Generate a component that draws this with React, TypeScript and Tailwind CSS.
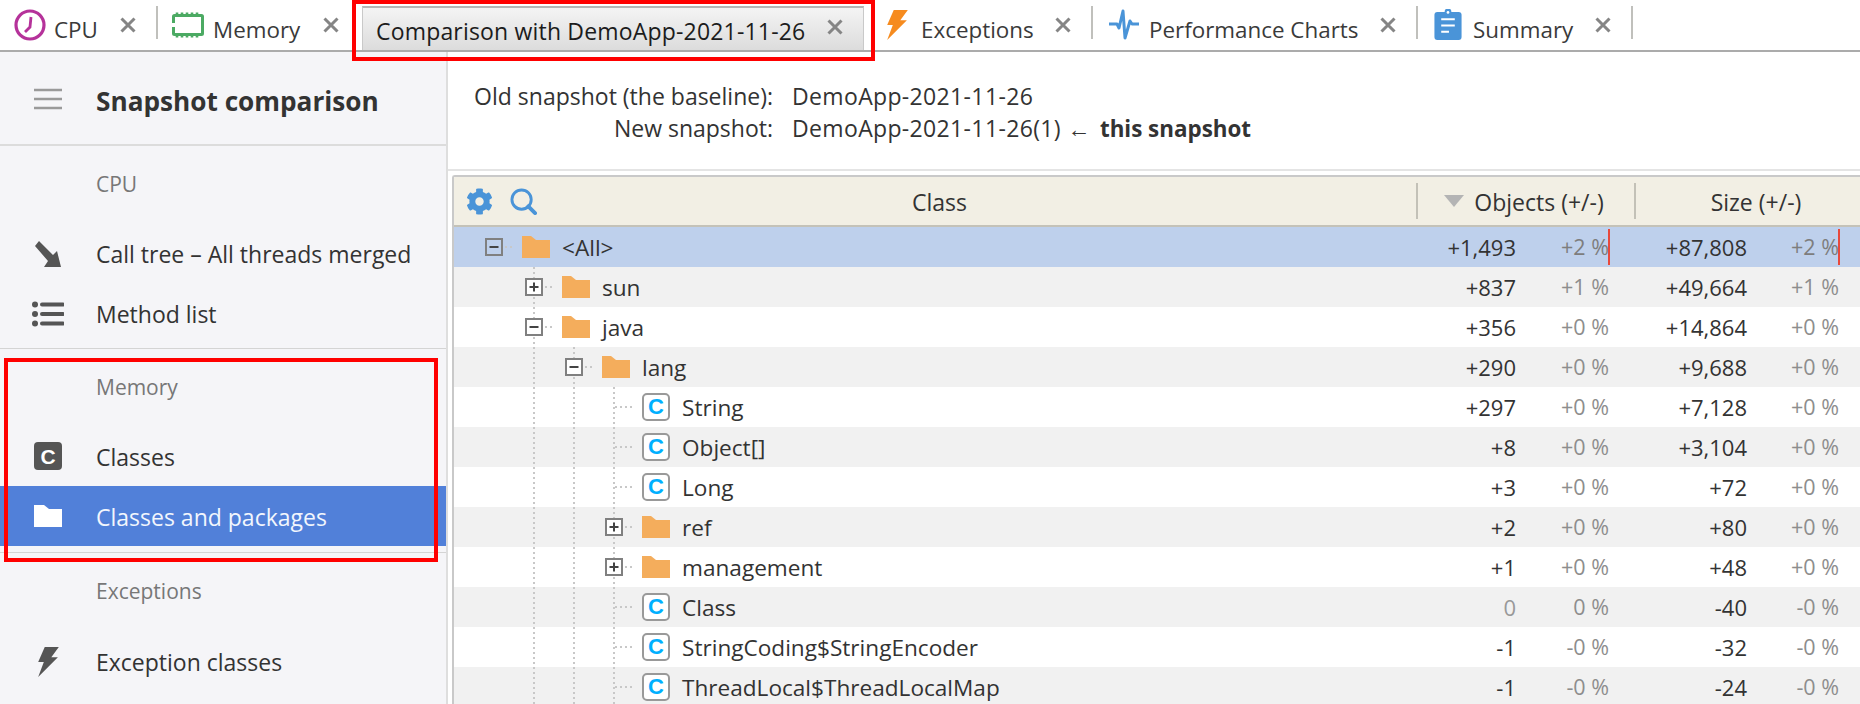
import { FaCog } from "react-icons/fa";
import type { ReactNode } from "react";

const FONT = "font-['Open_Sans','Noto_Sans',sans-serif]";

function Close() {
  return (
    <svg viewBox="0 0 16 16" className="w-[16px] h-[16px]" aria-hidden="true">
      <path d="M1.5 1.5 14.5 14.5M14.5 1.5 1.5 14.5" stroke="#858585" strokeWidth="3" fill="none" />
    </svg>
  );
}

function CpuIcon() {
  return (
    <svg viewBox="0 0 32 32" className="w-[32px] h-[32px]" aria-hidden="true">
      <circle cx="16" cy="16" r="14" fill="none" stroke="#b5329a" strokeWidth="3.2" />
      <path d="M17 8 L16 18 L11 23" fill="none" stroke="#b5329a" strokeWidth="2.8" />
    </svg>
  );
}

function MemoryIcon() {
  return (
    <svg viewBox="0 0 32 26" className="w-[32px] h-[26px]" aria-hidden="true">
      <rect x="1.5" y="3.5" width="29" height="19" rx="1" fill="none" stroke="#4caa63" strokeWidth="3" />
      <path d="M5 0.5v3M10 0.5v3M15 0.5v3M20 0.5v3M25 0.5v3M5 22.5v3M10 22.5v3M15 22.5v3M20 22.5v3M25 22.5v3" stroke="#4caa63" strokeWidth="2.6" />
      <path d="M0 11h3v4H0z" fill="#fff" />
    </svg>
  );
}

function BoltIcon({ fill, className }: { fill: string; className: string }) {
  return (
    <svg viewBox="0 0 24 32" className={className} aria-hidden="true">
      <path d="M8 0H23L15 11H22L1 32L7 16H1Z" fill={fill} />
    </svg>
  );
}

function PulseIcon() {
  return (
    <svg viewBox="0 0 32 32" className="w-[32px] h-[32px]" aria-hidden="true">
      <path d="M1 15H9L11 19L15 2L17 29L22 12L24 15H31" fill="none" stroke="#4a94d8" strokeWidth="3" strokeLinejoin="round" />
    </svg>
  );
}

function SummaryIcon() {
  return (
    <svg viewBox="0 0 28 32" className="w-[28px] h-[31px]" aria-hidden="true">
      <path d="M3 3H10.5A3.5 3.5 0 0 1 17.5 3H25A3 3 0 0 1 28 6V29A3 3 0 0 1 25 32H3A3 3 0 0 1 0 29V6A3 3 0 0 1 3 3Z" fill="#4a94d8" />
      <circle cx="14" cy="3.5" r="1.4" fill="#fff" />
      <path d="M7 10.5H21M7 17H21M7 23.5H15" stroke="#fff" strokeWidth="2" />
    </svg>
  );
}

function Tab({ icon, label, iconGap, sep = true, className }: { icon: ReactNode; label: string; iconGap: string; sep?: boolean; className: string }) {
  return (
    <div className={`flex items-center h-[50px] shrink-0 ${className}`}>
      <span className={`flex shrink-0 -mt-[1px] ${iconGap}`}>{icon}</span>
      <span className="flex-1 text-[22.4px] text-[#3a3a3a] mt-[10px] leading-[30px] whitespace-nowrap">{label}</span>
      <span className="flex -mt-[1px]">
        <Close />
      </span>
      {sep && <span className="w-[2px] h-[33px] bg-[#c0c0bc] ml-[20px] -mt-[5px]" />}
    </div>
  );
}

function TabBar() {
  return (
    <div className="relative flex h-[52px] border-b-2 border-[#ababab] bg-white shrink-0">
      <Tab className="w-[158px] pl-[14px]" iconGap="mr-[8px]" label="CPU" icon={<CpuIcon />} />
      <Tab className="w-[204px] pl-[14px] pr-[23px]" iconGap="mr-[9px]" label="Memory" sep={false} icon={<MemoryIcon />} />
      <div className="mt-[6px] w-[502px] h-[44px] shrink-0 flex items-center pl-[13px] pr-[20px] border-x border-t-2 border-x-[#c9c9c9] border-t-[#b5b5b5] bg-gradient-to-b from-[#f4f4f4] to-[#dcdcdc]">
        <span className="flex-1 text-[23px] tracking-[0.18px] text-[#1c1c1c] mt-[4px] leading-[30px] whitespace-nowrap">Comparison with DemoApp-2021-11-26</span>
        <span className="flex -mt-[5px]"><Close /></span>
      </div>
      <Tab className="w-[229px] pl-[22px]" iconGap="mr-[12px]" label="Exceptions" icon={<BoltIcon fill="#f68b1f" className="w-[23px] h-[30px]" />} />
      <Tab className="w-[325px] pl-[15px]" iconGap="mr-[9px]" label="Performance Charts" icon={<PulseIcon />} />
      <Tab className="w-[215px] pl-[16px]" iconGap="mr-[11px]" label="Summary" icon={<SummaryIcon />} />
      <div className="absolute left-[352px] top-0 w-[523px] h-[61px] border-4 border-[#ff0000] pointer-events-none z-10" />
    </div>
  );
}

function NavLabel({ children, className }: { children: string; className: string }) {
  return <div className={`pl-[96px] pt-[23px] text-[21px] text-[#777] leading-[30px] ${className}`}>{children}</div>;
}

function NavItem({ icon, label, selected, low }: { icon: ReactNode; label: string; selected?: boolean; low?: boolean }) {
  return (
    <div className={`flex items-center h-[60px] ${selected ? "bg-[#5180d9] text-[#f2f6fd]" : "text-[#333]"}`}>
      <span className="w-[96px] flex justify-center">{icon}</span>
      <span className={`text-[23px] leading-[30px] ${low ? "mt-[2px]" : ""}`}>{label}</span>
    </div>
  );
}

function Sidebar() {
  return (
    <aside className="relative w-[448px] shrink-0 bg-[#f5f5f8] border-r-2 border-[#dedede]">
      <div className="flex items-center h-[94px] border-b-2 border-[#dcdcdc]">
        <svg viewBox="0 0 28 22" className="ml-[34px] w-[28px] h-[22px] mt-[1px]" aria-hidden="true">
          <path d="M0 2H28M0 11H28M0 20H28" stroke="#9a9a9a" strokeWidth="2.6" />
        </svg>
        <span className="ml-[34px] text-[26.2px] font-bold text-[#333] leading-[34px] mt-[5px]">Snapshot comparison</span>
      </div>
      <NavLabel className="h-[78px]">CPU</NavLabel>
      <NavItem
        label="Call tree – All threads merged"
        icon={
          <svg viewBox="0 0 26 26" className="w-[26px] h-[26px]" aria-hidden="true">
            <path d="M4 0 18 14 22 10 26 26 9 26 13 20 0 5Z" fill="#555" />
          </svg>
        }
      />
      <NavItem
        label="Method list"
        icon={
          <svg viewBox="0 0 32 26" className="w-[32px] h-[26px]" aria-hidden="true">
            <circle cx="3" cy="3.5" r="3" fill="#555" />
            <circle cx="3" cy="13" r="3" fill="#555" />
            <circle cx="3" cy="22.5" r="3" fill="#555" />
            <path d="M10 3.5H31M10 13H31M10 22.5H31" stroke="#555" strokeWidth="4" strokeLinecap="round" />
          </svg>
        }
      />
      <div className="mt-[4px] border-t border-[#d4d4d4]" />
      <NavLabel className="h-[77px]">Memory</NavLabel>
      <NavItem
        low
        label="Classes"
        icon={
          <span className="w-[28px] h-[28px] rounded-[4px] bg-[#555] flex items-center justify-center text-white text-[21px] font-bold font-['Liberation_Sans',sans-serif] leading-none">
            C
          </span>
        }
      />
      <NavItem
        low
        selected
        label="Classes and packages"
        icon={
          <svg viewBox="0 0 28 22" className="w-[28px] h-[22px]" aria-hidden="true">
            <path d="M0 0H10L15 4H28V22H0Z" fill="#fff" />
          </svg>
        }
      />
      <div className="mt-[6px] border-t border-[#d4d4d4]" />
      <NavLabel className="h-[79px]">Exceptions</NavLabel>
      <NavItem label="Exception classes" icon={<BoltIcon fill="#555" className="w-[23px] h-[30px]" />} />
      <div className="absolute left-[4px] top-[306px] w-[434px] h-[204px] border-4 border-[#ff0000] pointer-events-none" />
    </aside>
  );
}

function Folder() {
  return (
    <svg viewBox="0 0 28 22" className="w-[28px] h-[22px] shrink-0" aria-hidden="true">
      <path d="M0 0H9L14 4H28V22H0Z" fill="#f4ad5c" />
    </svg>
  );
}

function ClassIcon() {
  return (
    <span className="w-[28px] h-[28px] shrink-0 rounded-[5px] border-2 border-[#999] bg-white flex items-center justify-center text-[#00b0ff] text-[22px] font-bold font-['Liberation_Sans',sans-serif] leading-none">
      C
    </span>
  );
}

function Expander({ open, selected }: { open: boolean; selected: boolean }) {
  return (
    <svg viewBox="0 0 18 18" className="relative w-[18px] h-[18px]" aria-hidden="true">
      <rect x="1" y="1" width="16" height="16" fill={selected ? "#bed0ec" : "#fff"} stroke="#808080" strokeWidth="2" />
      <path d={open ? "M4.5 9H13.5" : "M4.5 9H13.5M9 4.5V13.5"} stroke="#444" strokeWidth="2" />
    </svg>
  );
}

type Row = {
  name: string;
  depth: number;
  kind: "open" | "closed" | "class";
  objects: string;
  objectsPct: string;
  size: string;
  sizePct: string;
};

const ROWS: Row[] = [
  { name: "<All>", depth: 0, kind: "open", objects: "+1,493", objectsPct: "+2 %", size: "+87,808", sizePct: "+2 %" },
  { name: "sun", depth: 1, kind: "closed", objects: "+837", objectsPct: "+1 %", size: "+49,664", sizePct: "+1 %" },
  { name: "java", depth: 1, kind: "open", objects: "+356", objectsPct: "+0 %", size: "+14,864", sizePct: "+0 %" },
  { name: "lang", depth: 2, kind: "open", objects: "+290", objectsPct: "+0 %", size: "+9,688", sizePct: "+0 %" },
  { name: "String", depth: 3, kind: "class", objects: "+297", objectsPct: "+0 %", size: "+7,128", sizePct: "+0 %" },
  { name: "Object[]", depth: 3, kind: "class", objects: "+8", objectsPct: "+0 %", size: "+3,104", sizePct: "+0 %" },
  { name: "Long", depth: 3, kind: "class", objects: "+3", objectsPct: "+0 %", size: "+72", sizePct: "+0 %" },
  { name: "ref", depth: 3, kind: "closed", objects: "+2", objectsPct: "+0 %", size: "+80", sizePct: "+0 %" },
  { name: "management", depth: 3, kind: "closed", objects: "+1", objectsPct: "+0 %", size: "+48", sizePct: "+0 %" },
  { name: "Class", depth: 3, kind: "class", objects: "0", objectsPct: "0 %", size: "-40", sizePct: "-0 %" },
  { name: "StringCoding$StringEncoder", depth: 3, kind: "class", objects: "-1", objectsPct: "-0 %", size: "-32", sizePct: "-0 %" },
  { name: "ThreadLocal$ThreadLocalMap", depth: 3, kind: "class", objects: "-1", objectsPct: "-0 %", size: "-24", sizePct: "-0 %" },
];

// dotted tree lines, drawn as a gradient so the dots stay square
function VGuide() {
  return <span className="absolute left-[19px] top-0 bottom-0 w-[2px] bg-[repeating-linear-gradient(to_bottom,#c8c8c8_0,#c8c8c8_2px,transparent_2px,transparent_5px)]" />;
}

function TreeRow({ row, index }: { row: Row; index: number }) {
  const selected = index === 0;
  const zebra = selected ? "bg-[#bed0ec]" : index % 2 === 1 ? "bg-[#f1f1f1]" : "bg-white";
  const zero = row.objects === "0";
  return (
    <div className={`flex h-[40px] ${zebra}`}>
      <div className="flex-1 flex items-center pl-[20px] min-w-0">
        {Array.from({ length: row.depth }).map((_, i) => (
          <span key={i} className="relative w-[40px] self-stretch shrink-0">
            {i > 0 && <VGuide />}
          </span>
        ))}
        <span className="relative w-[40px] self-stretch shrink-0 flex items-center pl-[11px]">
          {row.depth > 0 && <VGuide />}
          <span className="absolute left-[21px] w-[18px] top-[19px] h-[2px] bg-[repeating-linear-gradient(to_right,#c8c8c8_0,#c8c8c8_2px,transparent_2px,transparent_5px)]" />
          {row.kind !== "class" && <Expander open={row.kind === "open"} selected={selected} />}
        </span>
        <span className="ml-[8px] flex items-center">
          {row.kind === "class" ? <ClassIcon /> : <Folder />}
        </span>
        <span className={`${row.kind === "class" ? "ml-[12px]" : "ml-[12px]"} text-[22.6px] text-[#333] leading-[30px] mt-[2px] whitespace-nowrap`}>{row.name}</span>
      </div>
      <div className="relative w-[218px] shrink-0 flex items-center justify-end pr-[25px]">
        <span className={`text-[22px] leading-[30px] ${zero ? "text-[#999]" : "text-[#333]"}`}>{row.objects}</span>
        <span className={`w-[93px] text-right text-[21.5px] leading-[30px] -mt-[1px] ${selected ? "text-[#7d7d7d]" : "text-[#8d8d8d]"}`}>{row.objectsPct}</span>
        {selected && <span className="absolute right-[24px] top-[2px] bottom-[2px] w-[2px] bg-[#e8493c]" />}
      </div>
      <div className="relative w-[226px] shrink-0 flex items-center justify-end pr-[21px]">
        <span className="text-[22px] text-[#333] leading-[30px]">{row.size}</span>
        <span className={`w-[92px] text-right text-[21.5px] leading-[30px] -mt-[1px] ${selected ? "text-[#7d7d7d]" : "text-[#8d8d8d]"}`}>{row.sizePct}</span>
        {selected && <span className="absolute right-[20px] top-[2px] bottom-[2px] w-[2px] bg-[#e8493c]" />}
      </div>
    </div>
  );
}

function Table() {
  return (
    <div className="ml-[4px] mt-[4px] flex-1 border-l-2 border-t-2 border-[#c9c9c9] rounded-tl-[3px] bg-white overflow-hidden">
      <div className="flex items-center h-[50px] border-b-2 border-[#c4c2b8] bg-[#f2efe4] text-[23px] text-[#333] leading-[30px]">
        <div className="flex-1 flex items-center relative self-stretch">
          <span className="ml-[12px] flex text-[#4a94d8]"><FaCog className="w-[27px] h-[27px]" /></span>
          <svg viewBox="0 0 28 28" className="ml-[17px] w-[27px] h-[27px]" aria-hidden="true">
            <circle cx="12" cy="12" r="10" fill="none" stroke="#4a94d8" strokeWidth="3" />
            <path d="M19 19 26 26" stroke="#4a94d8" strokeWidth="4" strokeLinecap="round" />
          </svg>
          <span className="flex-1 text-center pr-[74px] mt-[2px]">Class</span>
        </div>
        <div className="w-[218px] h-[36px] border-l-2 border-[#c3c1b7] flex items-center justify-center gap-[10px] pr-[4px]">
          <svg viewBox="0 0 20 12" className="w-[20px] h-[12px]" aria-hidden="true">
            <path d="M0 0H20L10 12Z" fill="#b4b4b4" />
          </svg>
          <span className="mt-[2px]">Objects (+/-)</span>
        </div>
        <div className="w-[226px] h-[36px] border-l-2 border-[#c3c1b7] flex items-center justify-center pl-[16px]">
          <span className="mt-[2px]">Size (+/-)</span>
        </div>
      </div>
      {ROWS.map((row, i) => (
        <TreeRow key={row.name} row={row} index={i} />
      ))}
    </div>
  );
}

export default function App() {
  return (
    <div className={`w-[1860px] h-[704px] overflow-hidden flex flex-col bg-white ${FONT}`}>
      <TabBar />
      <div className="flex flex-1 min-h-0">
        <Sidebar />
        <main className="flex-1 flex flex-col min-w-0">
          <div className="h-[119px] border-b-2 border-[#e4e4e4] pt-[28px] text-[23px] text-[#333] leading-[32px] flex">
            <div className="w-[325px] text-right">
              <div>Old snapshot (the baseline):</div>
              <div>New snapshot:</div>
            </div>
            <div className="ml-[19px] tracking-[0.35px]">
              <div>DemoApp-2021-11-26</div>
              <div>
                DemoApp-2021-11-26(1) ← <b className="ml-[3px] font-bold text-[22.4px] tracking-normal">this snapshot</b>
              </div>
            </div>
          </div>
          <Table />
        </main>
      </div>
    </div>
  );
}
